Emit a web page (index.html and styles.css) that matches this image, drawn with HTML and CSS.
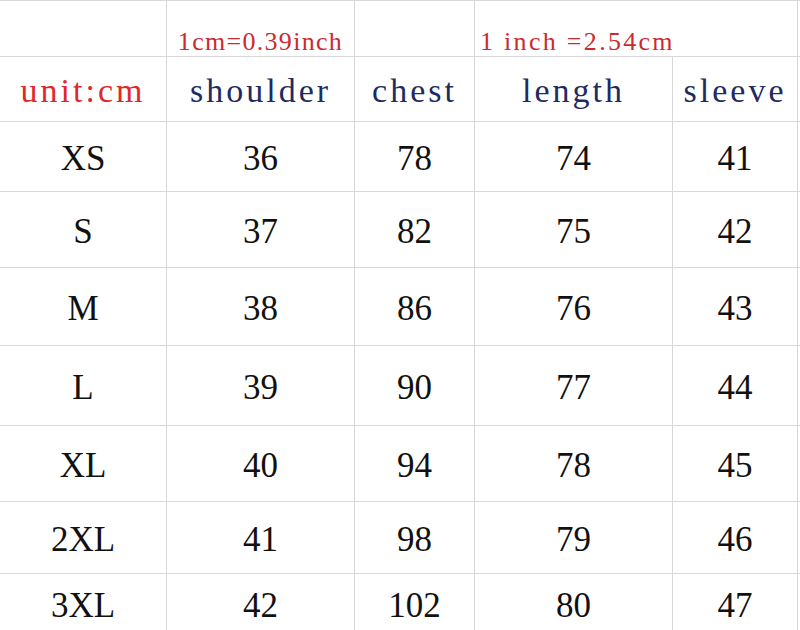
FILE: index.html
```html
<!DOCTYPE html>
<html lang="en">
<head>
<meta charset="utf-8">
<title>Size chart</title>
<link rel="stylesheet" href="styles.css">
</head>
<body>
<div class="sheet">
  <div class="cell note-row"></div>
  <div class="cell note-row note-center"><span class="note">1cm=0.39inch</span></div>
  <div class="cell note-row"></div>
  <div class="cell note-row note-left span2"><span class="note note-wide">1 inch =2.54cm</span></div>
  <div class="cell note-row edge"></div>

  <div class="cell head unit">unit:cm</div>
  <div class="cell head">shoulder</div>
  <div class="cell head">chest</div>
  <div class="cell head">length</div>
  <div class="cell head">sleeve</div>
  <div class="cell edge"></div>

  <div class="cell num">XS</div><div class="cell num">36</div><div class="cell num">78</div><div class="cell num">74</div><div class="cell num">41</div><div class="cell edge"></div>
  <div class="cell num">S</div><div class="cell num">37</div><div class="cell num">82</div><div class="cell num">75</div><div class="cell num">42</div><div class="cell edge"></div>
  <div class="cell num">M</div><div class="cell num">38</div><div class="cell num">86</div><div class="cell num">76</div><div class="cell num">43</div><div class="cell edge"></div>
  <div class="cell num">L</div><div class="cell num">39</div><div class="cell num">90</div><div class="cell num">77</div><div class="cell num">44</div><div class="cell edge"></div>
  <div class="cell num">XL</div><div class="cell num">40</div><div class="cell num">94</div><div class="cell num">78</div><div class="cell num">45</div><div class="cell edge"></div>
  <div class="cell num">2XL</div><div class="cell num">41</div><div class="cell num">98</div><div class="cell num">79</div><div class="cell num">46</div><div class="cell edge"></div>
  <div class="cell num">3XL</div><div class="cell num">42</div><div class="cell num">102</div><div class="cell num">80</div><div class="cell num">47</div><div class="cell edge"></div>
</div>
</body>
</html>
```
FILE: styles.css
```css
html, body {
  margin: 0;
  padding: 0;
  background: #ffffff;
  overflow: hidden;
}

.sheet {
  width: 800px;
  display: grid;
  grid-template-columns: 167px 188px 120px 198px 125px 2px;
  grid-template-rows: 56px 65px 70px 76px 78px 80px 76px 72px 60px;
  border-top: 1px solid #d8d8d8;
  font-family: "Liberation Serif", "Times New Roman", serif;
}

.cell {
  box-sizing: border-box;
  border-right: 1px solid #d8d8d8;
  border-bottom: 1px solid #d8d8d8;
  display: flex;
  align-items: center;
  justify-content: center;
  white-space: nowrap;
  overflow: visible;
}

.edge {
  border-right: none;
}

.span2 {
  grid-column: span 2;
}

.note-row {
  align-items: flex-end;
  padding-bottom: 1px;
}

.note-left {
  justify-content: flex-start;
  padding-left: 5px;
}

.note {
  font-size: 26px;
  letter-spacing: 1.3px;
  color: #cc2a2e;
  line-height: 1;
}

.note-wide {
  letter-spacing: 2.3px;
}

.head {
  font-size: 34px;
  letter-spacing: 3px;
  color: #1d2b5f;
  padding-top: 4px;
}

.unit {
  color: #e0282a;
}

.num {
  font-size: 35px;
  color: #111111;
  padding-top: 4px;
}
```
